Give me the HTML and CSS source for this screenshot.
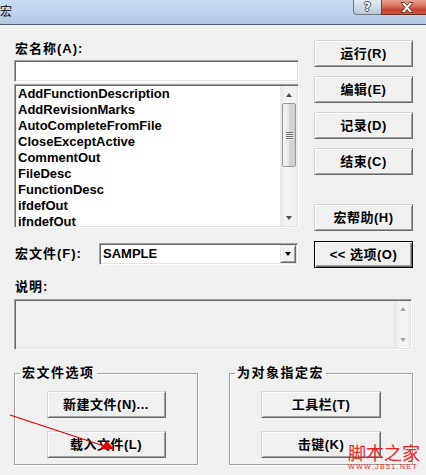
FILE: index.html
```html
<!DOCTYPE html>
<html lang="zh-CN">
<head>
<meta charset="utf-8">
<title>宏</title>
<link rel="stylesheet" href="styles.css">
</head>
<body>
<div class="window">
  <header class="titlebar">
    <span class="title">宏</span>
    <div class="caption-buttons">
      <span class="cap-btn help">?</span>
      <span class="cap-btn close">
        <svg width="14" height="11" viewBox="0 0 14 11"><path d="M1 0.5h3.5l2.5 3 2.5-3h3.5l-4.2 5 4.2 5h-3.5l-2.5-3-2.5 3h-3.5l4.2-5z" fill="#fff" stroke="#5a2a22" stroke-width="0.9"/></svg>
      </span>
    </div>
  </header>

  <main class="content">
    <section class="top">
      <div class="left-col">
        <div class="label first">宏名称(A):</div>
        <div class="textbox"></div>
        <div class="listbox">
          <ul class="items">
            <li>AddFunctionDescription</li>
            <li>AddRevisionMarks</li>
            <li>AutoCompleteFromFile</li>
            <li>CloseExceptActive</li>
            <li>CommentOut</li>
            <li>FileDesc</li>
            <li>FunctionDesc</li>
            <li>ifdefOut</li>
            <li>ifndefOut</li>
          </ul>
          <div class="vscroll">
            <div class="arrow up"></div>
            <div class="thumb"><span></span><span></span><span></span><span></span></div>
            <div class="track-fill"></div>
            <div class="arrow down"></div>
          </div>
        </div>
        <div class="combo-row">
          <div class="label combo-label">宏文件(F):</div>
          <div class="combo">
            <span class="combo-text">SAMPLE</span>
            <span class="combo-btn"><span class="tri"></span></span>
          </div>
        </div>
      </div>

      <div class="right-col">
        <div class="btn">运行(R)</div>
        <div class="btn gap9">编辑(E)</div>
        <div class="btn gap9">记录(D)</div>
        <div class="btn gap9">结束(C)</div>
        <div class="btn gap29">宏帮助(H)</div>
        <div class="btn default gap10">&lt;&lt; 选项(O)</div>
      </div>
    </section>

    <div class="label desc-label">说明:</div>
    <div class="descbox">
      <div class="desc-text"></div>
      <div class="vscroll small">
        <div class="arrow up dim"></div>
        <div class="track-fill"></div>
        <div class="arrow down dim"></div>
      </div>
    </div>

    <section class="groups">
      <fieldset class="group">
        <legend>宏文件选项</legend>
        <div class="btn gbtn">新建文件(N)...</div>
        <div class="btn gbtn second">载入文件(L)</div>
      </fieldset>
      <fieldset class="group">
        <legend>为对象指定宏</legend>
        <div class="btn gbtn wide">工具栏(T)</div>
        <div class="btn gbtn wide second">击键(K)</div>
      </fieldset>
    </section>
  </main>

  <svg class="annotation" width="426" height="475" viewBox="0 0 426 475">
    <line x1="10" y1="415" x2="104" y2="446" stroke="#e00000" stroke-width="1.3"/>
    <polygon points="100,449 107,441 114,449" fill="#e00000"/>
  </svg>

  <div class="watermark">
    <div class="wm-big">脚本之家</div>
    <div class="wm-small">WWW.JB51.NET</div>
  </div>
</div>
</body>
</html>
```

FILE: styles.css
```css
html, body {
  margin: 0;
  padding: 0;
}

body {
  background: #f0f0f0;
  font-family: "Liberation Sans", "Noto Sans CJK SC", sans-serif;
  font-size: 13px;
  font-weight: bold;
  color: #000;
}

.window {
  position: relative;
  width: 426px;
  height: 475px;
  overflow: hidden;
  background: #f0f0f0;
}

/* ---------- title bar ---------- */
.titlebar {
  display: flex;
  align-items: flex-start;
  height: 24px;
  border-bottom: 1px solid #4f5c6c;
  background: linear-gradient(180deg, #cadcf2 0%, #c0d4ed 45%, #b4c8e2 100%);
}

.title {
  font-family: "Noto Sans CJK SC", sans-serif;
  font-weight: normal;
  font-size: 12px;
  line-height: 14px;
  margin-top: 4px;
  margin-left: 0;
}

.caption-buttons {
  margin-left: auto;
  display: flex;
}

.cap-btn {
  box-sizing: border-box;
  height: 15px;
  display: flex;
  align-items: center;
  justify-content: center;
}

.help {
  width: 28px;
  border-left: 1px solid #6a7889;
  border-bottom: 1px solid #6a7889;
  border-bottom-left-radius: 4px;
  background: linear-gradient(180deg, #e3eaf3 0%, #cfdae8 50%, #b9c8db 100%);
  color: #fff;
  font-family: "DejaVu Sans", sans-serif;
  font-size: 12px;
  line-height: 13px;
  text-shadow: -1px 0 #3d4a5a, 1px 0 #3d4a5a, 0 -1px #3d4a5a, 0 1px #3d4a5a;
}

.close {
  width: 45px;
  padding-left: 5px;
  border-bottom: 1px solid #6b2a20;
  border-left: 1px solid #7a3a30;
  background: linear-gradient(180deg, #e9a192 0%, #d9705d 45%, #c4402b 70%, #d35a44 100%);
}

/* ---------- content ---------- */
.content {
  padding: 0 13px 0 14px;
}

.top {
  display: flex;
  gap: 15px;
}

.left-col {
  width: 285px;
  display: flex;
  flex-direction: column;
}

.label {
  line-height: 16px;
  padding-left: 1px;
  letter-spacing: 1px;
}

.label.first {
  margin-top: 16px;
}

.textbox,
.listbox,
.combo,
.descbox {
  box-sizing: border-box;
  border: 1px solid;
  border-color: #a0a0a0 #ffffff #ffffff #a0a0a0;
  box-shadow: inset 1px 1px #696969, inset -1px -1px #e3e3e3;
}

.textbox {
  margin-top: 3px;
  height: 22px;
  background: #fff;
}

.listbox {
  margin-top: 2px;
  height: 144px;
  background: #fff;
  display: flex;
  padding: 1px;
  overflow: hidden;
}

.items {
  flex: 1;
  margin: 0;
  padding: 0 0 0 2px;
  list-style: none;
  line-height: 16px;
  overflow: hidden;
}

/* ---------- scrollbar ---------- */
.vscroll {
  width: 16px;
  display: flex;
  flex-direction: column;
  background: linear-gradient(90deg, #e6e6e6 0%, #f3f3f3 20%, #f3f3f3 80%, #ececec 100%);
  border-left: 1px solid #eaeaea;
}

.arrow {
  height: 17px;
  display: flex;
  align-items: center;
  justify-content: center;
}

.arrow::before {
  content: "";
  width: 0;
  height: 0;
  border-left: 3.5px solid transparent;
  border-right: 3.5px solid transparent;
}

.arrow.up::before {
  border-bottom: 4px solid #4d4d4d;
}

.arrow.down::before {
  border-top: 4px solid #4d4d4d;
}

.arrow.dim.up::before {
  border-bottom-color: #a8a8a8;
}

.arrow.dim.down::before {
  border-top-color: #a8a8a8;
}

.thumb {
  box-sizing: border-box;
  height: 64px;
  margin: 0 0 0 1px;
  width: 14px;
  border: 1px solid #979797;
  border-radius: 2px;
  background: linear-gradient(90deg, #f3f3f3 0%, #e8e8e8 45%, #d6d6d6 55%, #cfcfcf 100%);
  display: flex;
  flex-direction: column;
  align-items: center;
  justify-content: center;
  gap: 1px;
}

.thumb span {
  width: 7px;
  height: 1px;
  background: #666;
  box-shadow: 0 1px #f4f4f4;
}

.track-fill {
  flex: 1;
}

/* ---------- combo ---------- */
.combo-row {
  margin-top: 15px;
  display: flex;
  align-items: center;
}

.combo-label {
  width: 84px;
}

.combo {
  width: 199px;
  height: 22px;
  background: #fff;
  display: flex;
  align-items: center;
  padding: 1px;
}

.combo-text {
  flex: 1;
  padding-left: 2px;
  line-height: 16px;
}

.combo-btn {
  box-sizing: border-box;
  width: 16px;
  height: 18px;
  border: 1px solid;
  border-color: #e3e3e3 #696969 #696969 #e3e3e3;
  box-shadow: inset 1px 1px #fff, inset -1px -1px #a0a0a0;
  background: #f0f0f0;
  display: flex;
  align-items: center;
  justify-content: center;
}

.tri {
  width: 0;
  height: 0;
  border-left: 3.5px solid transparent;
  border-right: 3.5px solid transparent;
  border-top: 4px solid #000;
}

/* ---------- buttons ---------- */
.right-col {
  width: 99px;
  padding-top: 15px;
  display: flex;
  flex-direction: column;
}

.btn {
  box-sizing: border-box;
  height: 27px;
  border: 1px solid;
  border-color: #d4d4d4 #696969 #696969 #d4d4d4;
  box-shadow: inset 1px 1px #fff, inset -1px -1px #a0a0a0;
  background: #f0f0f0;
  display: flex;
  align-items: center;
  justify-content: center;
  line-height: 16px;
  letter-spacing: 0.5px;
  white-space: nowrap;
}

.gap9 { margin-top: 9px; }
.gap29 { margin-top: 29px; }
.gap10 { margin-top: 10px; }

.btn.default {
  border-color: #000;
  box-shadow: inset 1px 1px #fff, inset -1px -1px #696969, inset -2px -2px #a0a0a0;
}

/* ---------- description ---------- */
.desc-label {
  margin-top: 11px;
}

.descbox {
  margin-top: 4px;
  width: 398px;
  height: 51px;
  background: #f0f0f0;
  display: flex;
  padding: 1px;
}

.desc-text {
  flex: 1;
}

.vscroll.small {
  width: 15px;
}

.vscroll.small .arrow {
  height: 16px;
}

/* ---------- groups ---------- */
.groups {
  margin-top: 15px;
  display: flex;
  gap: 31px;
}

.group {
  box-sizing: border-box;
  width: 184px;
  height: 100px;
  margin: 0;
  padding: 10px 0 6px;
  border: 1px solid #a0a0a0;
  box-shadow: inset 1px 1px #fff, 1px 1px #fff;
  display: flex;
  flex-direction: column;
  align-items: center;
  min-width: 0;
}

.group legend {
  margin-left: 5px;
  padding: 0 2px;
  line-height: 16px;
  letter-spacing: 1.5px;
}

.gbtn {
  width: 119px;
}

.gbtn.wide {
  width: 120px;
}

.gbtn.second {
  margin-top: 13px;
}

/* ---------- overlays ---------- */
.annotation {
  position: absolute;
  left: 0;
  top: 0;
  pointer-events: none;
}

.watermark {
  position: absolute;
  left: 348px;
  top: 441px;
  color: #e5262b;
  font-weight: normal;
  pointer-events: none;
}

.wm-big {
  font-family: "Noto Sans CJK SC", sans-serif;
  font-size: 18px;
  line-height: 22px;
}

.wm-small {
  font-family: "Liberation Sans", sans-serif;
  font-size: 7px;
  line-height: 8px;
  letter-spacing: 1.4px;
}
```
